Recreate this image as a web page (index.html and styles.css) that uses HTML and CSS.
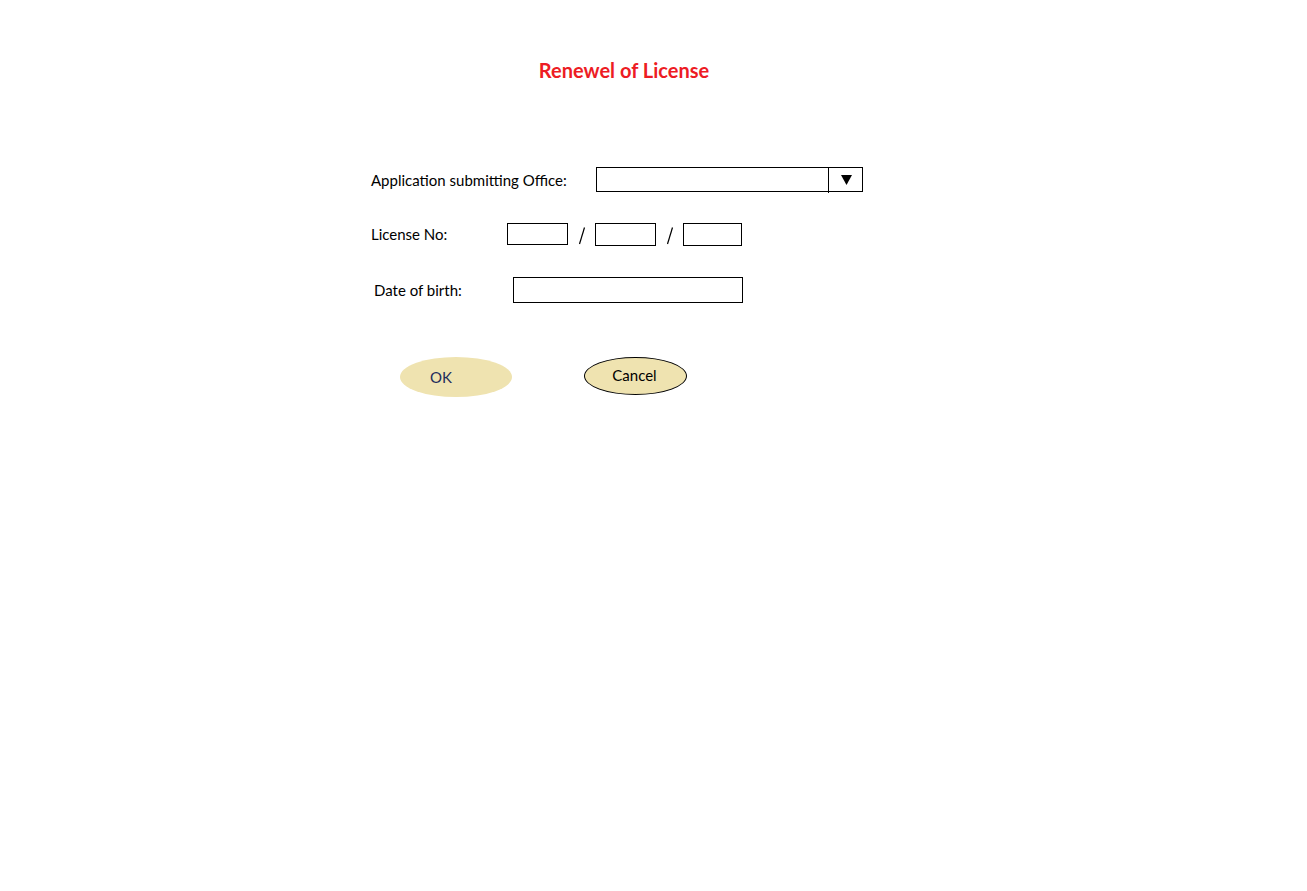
FILE: index.html
```html
<!DOCTYPE html>
<html>
<head>
<meta charset="utf-8">
<title>Renewel of License</title>
<link rel="stylesheet" href="styles.css">
</head>
<body>
<div class="form">
  <h1 class="title">Renewel of License</h1>

  <div class="row row-office">
    <span class="label label-office">Application submitting Office:</span>
    <div class="select">
      <div class="select-value"></div>
      <div class="select-btn">
        <svg width="11" height="10" viewBox="0 0 11 10"><polygon points="0,0 11,0 5.5,10" fill="#000"/></svg>
      </div>
    </div>
  </div>

  <div class="row row-license">
    <span class="label label-license">License No:</span>
    <div class="box box-l1"></div>
    <span class="slash"><svg width="8" height="18" viewBox="0 0 8 18"><line x1="6.5" y1="0.5" x2="1.5" y2="17" stroke="#000" stroke-width="1.2"/></svg></span>
    <div class="box box-l2"></div>
    <span class="slash"><svg width="8" height="18" viewBox="0 0 8 18"><line x1="6.5" y1="0.5" x2="1.5" y2="17" stroke="#000" stroke-width="1.2"/></svg></span>
    <div class="box box-l3"></div>
  </div>

  <div class="row row-dob">
    <span class="label label-dob">Date of birth:</span>
    <div class="box box-dob"></div>
  </div>

  <div class="buttons">
    <div class="btn btn-ok">OK</div>
    <div class="btn btn-cancel">Cancel</div>
  </div>
</div>
</body>
</html>
```

FILE: styles.css
```css
html, body {
  margin: 0;
  padding: 0;
  background: #ffffff;
}

body {
  font-family: Lato, "Open Sans", "Liberation Sans", sans-serif;
  font-size: 15px;
  color: #000;
}

.form {
  margin-left: 371px;
  width: 506px;
  padding-top: 57px;
  display: flex;
  flex-direction: column;
}

.title {
  margin: 0;
  text-align: center;
  color: #ed1c24;
  font-size: 20px;
  font-weight: bold;
  line-height: 26px;
}

.row {
  display: flex;
  align-items: center;
}

.row-office {
  margin-top: 84px;
  height: 25px;
}

.label-office {
  width: 225px;
}

.select {
  width: 267px;
  height: 25px;
  box-sizing: border-box;
  border: 1px solid #000;
  display: flex;
}

.select-value {
  flex: 1;
}

.select-btn {
  position: relative;
  width: 34px;
  height: 23px;
  display: flex;
  align-items: center;
  justify-content: center;
  padding-left: 3px;
  box-sizing: border-box;
}

.select-btn::before {
  content: "";
  position: absolute;
  left: 0;
  top: 0;
  bottom: -2px;
  width: 1px;
  background: #000;
}

.box {
  box-sizing: border-box;
  border: 1px solid #000;
  background: #fff;
}

.row-license {
  margin-top: 31px;
  height: 23px;
}

.label-license {
  width: 136px;
  margin-top: -2px;
}

.box-l1 {
  width: 61px;
  height: 22px;
  align-self: flex-start;
}

.box-l2 {
  width: 61px;
  height: 23px;
  align-self: flex-start;
}

.box-l3 {
  width: 59px;
  height: 23px;
  align-self: flex-end;
}

.slash {
  width: 27px;
  display: flex;
  justify-content: center;
  padding-top: 3px;
}

.row-dob {
  margin-top: 31px;
  height: 26px;
}

.label-dob {
  width: 139px;
  padding-left: 3px;
}

.box-dob {
  width: 230px;
  height: 26px;
}

.buttons {
  margin-top: 54px;
  display: flex;
  align-items: flex-start;
}

.btn {
  box-sizing: border-box;
  border-radius: 50%;
  background: #efe3b0;
  display: flex;
  align-items: center;
  justify-content: center;
  font-size: 15px;
}

.btn-ok {
  margin-left: 29px;
  width: 112px;
  height: 40px;
  color: #1f2d5c;
  padding-right: 30px;
  padding-bottom: 1px;
}

.btn-cancel {
  margin-left: 72px;
  width: 103px;
  height: 38px;
  border: 1px solid #000;
  color: #000;
  padding-right: 2px;
  padding-bottom: 2px;
}
```
